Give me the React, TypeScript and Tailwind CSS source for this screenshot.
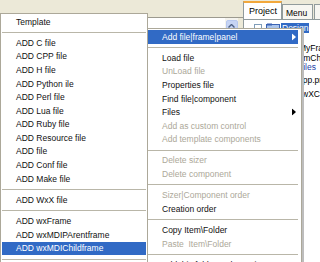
import React from "react";

type Entry = { label?: string; sep?: boolean; disabled?: boolean; selected?: boolean; arrow?: boolean };

const leftItems: Entry[] = [
  { label: "Template" },
  { sep: true },
  { label: "ADD C file" },
  { label: "ADD CPP file" },
  { label: "ADD H file" },
  { label: "ADD Python ile" },
  { label: "ADD Perl file" },
  { label: "ADD Lua file" },
  { label: "ADD Ruby file" },
  { label: "ADD Resource file" },
  { label: "ADD file" },
  { label: "ADD Conf file" },
  { label: "ADD Make file" },
  { sep: true },
  { label: "ADD WxX file" },
  { sep: true },
  { label: "ADD wxFrame" },
  { label: "ADD wxMDIPArentframe" },
  { label: "ADD wxMDIChildframe", selected: true },
  { sep: true },
];

const rightItems: Entry[] = [
  { label: "Add file|frame|panel", selected: true, arrow: true },
  { sep: true },
  { label: "Load file" },
  { label: "UnLoad file", disabled: true },
  { label: "Properties file" },
  { label: "Find file|component" },
  { label: "Files", arrow: true },
  { label: "Add as custom control", disabled: true },
  { label: "Add template components", disabled: true },
  { sep: true },
  { label: "Delete sizer", disabled: true },
  { label: "Delete component", disabled: true },
  { sep: true },
  { label: "Sizer|Component order", disabled: true },
  { label: "Creation order" },
  { sep: true },
  { label: "Copy Item\\Folder" },
  { label: "Paste  Item\\Folder", disabled: true },
  { sep: true },
  { label: "Add this folder to the project" },
];

function Arrow({ white }: { white?: boolean }) {
  return (
    <svg width="4" height="7" viewBox="0 0 4 7" className="absolute right-[2px] top-1/2 -translate-y-1/2">
      <path d="M0 0 L4 3.5 L0 7 Z" fill={white ? "#ffffff" : "#000000"} />
    </svg>
  );
}

function MenuList({ items }: { items: Entry[] }) {
  return (
    <>
      {items.map((it, i) =>
        it.sep ? (
          <div key={i} className="h-[7.6px] flex items-center">
            <div className="h-px w-full bg-[#b9b6a8]" />
          </div>
        ) : (
          <div
            key={i}
            className={
              "relative h-[13.6px] flex items-center pl-[14px] whitespace-pre leading-none " +
              (it.selected ? "bg-[#316ac5] text-white" : it.disabled ? "text-[#aca899]" : "text-[#111]")
            }
          >
            {it.label}
            {it.arrow && <Arrow white={it.selected} />}
          </div>
        )
      )}
    </>
  );
}

export default function App() {
  return (
    <div
      className="relative w-[320px] h-[262px] overflow-hidden bg-[#ece9d8] text-[8.5px]"
      style={{ fontFamily: '"Liberation Sans", Arial, sans-serif' }}
    >
      <div className="flex h-full">
        {/* editor area behind the menus */}
        <div className="w-[243px] shrink-0 flex flex-col">
          <div className="h-[17px] bg-[#ece9d8]" />
          <div className="flex-1 flex border-t border-[#9c9a8f] bg-white">
            <div className="flex-1" />
            <div className="w-[13px] bg-[#f4f3ee] pt-[2px] flex flex-col items-center">
              <div className="w-[12px] h-[11px] rounded-[2px] bg-[#c6d4f4] border border-[#b7c8ef] flex items-center justify-center">
                <svg width="7" height="4" viewBox="0 0 7 4">
                  <path d="M0.5 3.5 L3.5 0.5 L6.5 3.5" stroke="#4d6185" strokeWidth="1.4" fill="none" />
                </svg>
              </div>
            </div>
            <div className="w-[5px] bg-[#ece9d8]" />
          </div>
        </div>

        {/* project panel */}
        <div className="flex-1 min-w-0 overflow-hidden flex flex-col">
          <div className="h-[19px] flex items-end">
            <div className="w-[39px] shrink-0 h-[18px] bg-white border-t-2 border-t-[#f2a83c] border-x border-x-[#919b9c] px-[5px] pt-[2px] text-[9px] text-black">
              Project
            </div>
            <div className="w-[31px] shrink-0 h-[15px] bg-[#f7f6f1] border-t border-x border-[#919b9c] px-[3px] pt-[2px] text-black">
              Menu
            </div>
            <div className="w-[6px] shrink-0 h-[15px] ml-[1px] bg-[#f7f6f1] border-t border-l border-[#919b9c]" />
          </div>
          <div className="flex-1 bg-white border-l border-t border-[#919b9c] pt-[3px] flex flex-col text-black whitespace-nowrap">
            <div className="h-[10px] flex items-center">
              <div className="ml-[10px] w-[8px] h-[8px] shrink-0 border border-[#7f9db9] bg-white flex items-center justify-center">
                <div className="w-[4px] h-px bg-black" />
              </div>
              <svg width="14" height="10" viewBox="0 0 14 10" className="ml-[4px] shrink-0">
                <rect x="0.5" y="1.5" width="13" height="8" fill="#aac4ec" stroke="#3b63b4" />
                <rect x="1" y="0.5" width="5" height="2" fill="#3b63b4" />
              </svg>
              <div className="ml-[1px] h-[10px] px-[1px] bg-[#316ac5] text-white leading-[10px]">Design</div>
            </div>
            <div className="ml-[55px] mt-[10px] h-[11px] leading-[11px]">MyFrame</div>
            <div className="ml-[54px] h-[8px] leading-[8px]">frmChild</div>
            <div className="ml-[54px] h-[10px] leading-[10px] text-[#1c3fa8]">Files</div>
            <div className="ml-[54px] mt-[2px] h-[12px] leading-[12px]">app.pro</div>
            <div className="ml-[58px] mt-[2px] h-[12px] leading-[12px]">wXC</div>
          </div>
        </div>
      </div>

      {/* parent popup menu */}
      <div className="absolute left-[146px] top-[28px] w-[156px] bg-white border border-[#aca899] p-[1px] pr-[3px] shadow-[2px_0_0_#bdbdbd]">
        <MenuList items={rightItems} />
      </div>

      {/* submenu opened to the left */}
      <div className="absolute left-0 top-[13px] w-[148px] bg-white border border-[#aca899] p-[1px]">
        <MenuList items={leftItems} />
      </div>
    </div>
  );
}
